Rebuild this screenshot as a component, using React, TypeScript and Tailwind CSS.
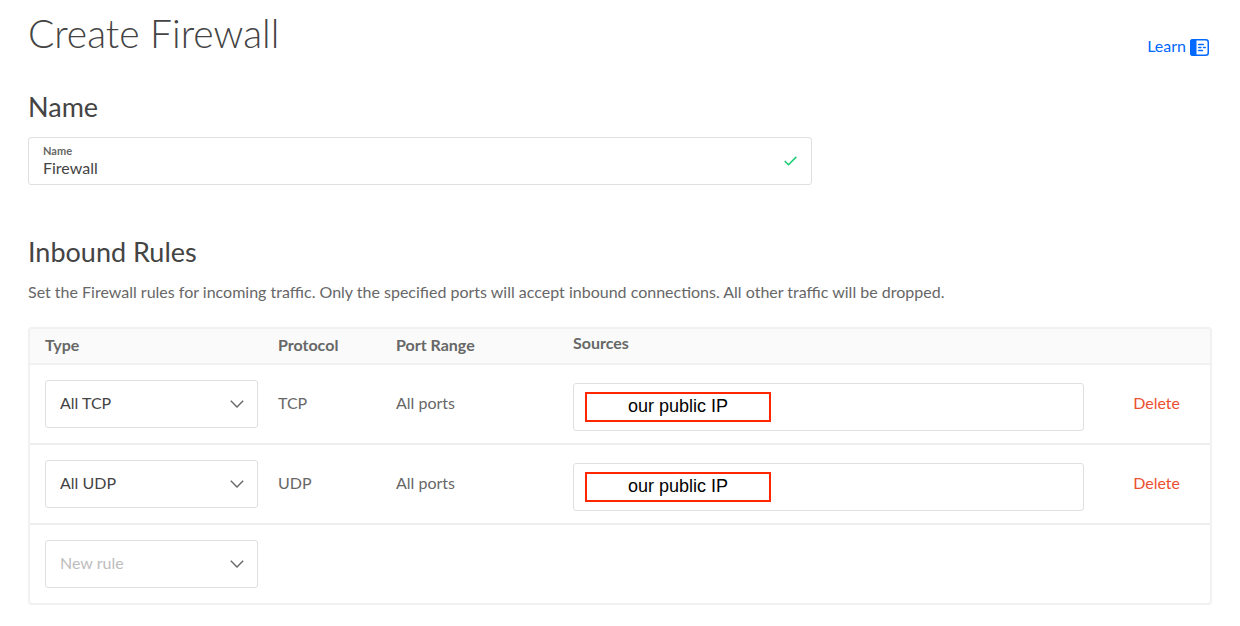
import React, { useState } from "react";

type Rule = { type: string; protocol: string; ports: string; source: string };

const initialRules: Rule[] = [
  { type: "All TCP", protocol: "TCP", ports: "All ports", source: "our public IP" },
  { type: "All UDP", protocol: "UDP", ports: "All ports", source: "our public IP" },
];

function TypeSelect({ label, value, placeholder }: { label: string; value: string; placeholder?: boolean }) {
  return (
    <div className="relative">
      <select
        aria-label={label}
        defaultValue={value}
        className={
          "block h-12 w-full appearance-none rounded-[3px] border border-[#dfdfdf] bg-white pr-10 pb-[2px] pl-[14px] text-base " +
          (placeholder ? "text-[#bdbdbd]" : "text-[#444444]")
        }
      >
        {placeholder && <option>New rule</option>}
        <option>All TCP</option>
        <option>All UDP</option>
      </select>
      <svg
        aria-hidden="true"
        viewBox="0 0 14 8"
        className="pointer-events-none absolute top-5 right-[14px] h-2 w-[14px] fill-none stroke-[#676767]"
        strokeWidth="1.4"
      >
        <path d="M0.8 0.8 7 7 13.2 0.8" />
      </svg>
    </div>
  );
}

function LearnIcon() {
  return (
    <svg aria-hidden="true" viewBox="0 0 19 17" className="h-[17px] w-[19px]">
      <rect x="0.75" y="0.75" width="17.5" height="15.5" rx="2.5" fill="#fff" stroke="#0069ff" strokeWidth="1.5" />
      <path d="M3 0H6.5V17H3A3 3 0 0 1 0 14V3A3 3 0 0 1 3 0Z" fill="#0069ff" />
      <path d="M8.7 5.5H13.3M8.7 8.5H11M13.5 8.5H15.3M8.7 11.5H12.5" stroke="#0069ff" strokeWidth="1.4" strokeLinecap="round" />
    </svg>
  );
}

export default function App() {
  const [rules, setRules] = useState(initialRules);

  return (
    <main className="px-7 pb-5 font-['Lato','Open_Sans',sans-serif] text-base text-[#676767]">
      <header className="flex items-start justify-between">
        <h1 className="pt-[7px] text-[39px] leading-[52px] font-light text-[#444444]">Create Firewall</h1>
        <a href="#learn" className="mt-[34px] mr-[3px] flex items-center gap-1 leading-6 text-[#0069ff]">
          <span className="pb-[2px]">Learn</span>
          <LearnIcon />
        </a>
      </header>

      <section className="pt-[31px]">
        <h2 className="text-[27px] leading-8 text-[#444444]">Name</h2>
        <div className="mt-[14px] flex h-12 max-w-[784px] items-center rounded-[3px] border border-[#dfdfdf] px-[14px]">
          <div className="flex grow flex-col pb-[2px]">
            <label htmlFor="firewall-name" className="text-[11px] leading-[15px] font-bold">
              Name
            </label>
            <input
              id="firewall-name"
              defaultValue="Firewall"
              className="h-5 w-full text-base leading-5 text-[#444444] outline-none"
            />
          </div>
          <svg aria-hidden="true" viewBox="0 0 13 10" className="h-[10px] w-[13px] fill-none stroke-[#15cd72]" strokeWidth="1.5">
            <path d="M0.7 5 4.5 8.7 12.3 0.9" />
          </svg>
        </div>
      </section>

      <section className="pt-[51px]">
        <h2 className="text-[27px] leading-8 text-[#444444]">Inbound Rules</h2>
        <p className="mt-3 leading-6">
          Set the Firewall rules for incoming traffic. Only the specified ports will accept inbound connections. All
          other traffic will be dropped.
        </p>

        <div className="mt-[23px] overflow-hidden rounded-[4px] border-2 border-[#f1f1f1]">
          <table className="w-full table-fixed border-separate border-spacing-0 text-left">
            <colgroup>
              <col className="w-[233px]" />
              <col className="w-[118px]" />
              <col className="w-[177px]" />
              <col />
              <col className="w-[111px]" />
            </colgroup>
            <thead className="bg-[#fafafa]">
              <tr className="h-9 leading-6 *:border-b-2 *:border-[#f1f1f1] *:pl-[15px] *:font-bold">
                <th scope="col" className="pb-[2px]">Type</th>
                <th scope="col" className="pb-[2px]">Protocol</th>
                <th scope="col" className="pb-[2px]">Port Range</th>
                <th scope="col" className="pt-[2px] align-top">Sources</th>
                <td />
              </tr>
            </thead>
            <tbody>
              {rules.map((rule) => (
                <tr key={rule.type} className="h-20 *:border-b-2 *:border-[#eeeeee]">
                  <td className="py-[15px] pr-[5px] pl-[15px]">
                    <TypeSelect label={`Type for ${rule.protocol} rule`} value={rule.type} />
                  </td>
                  <td className="pb-[2px] pl-[15px]">{rule.protocol}</td>
                  <td className="pb-[2px] pl-[15px]">{rule.ports}</td>
                  <td className="px-[15px] pt-[18px] pb-3">
                    <div className="flex h-12 items-center rounded-[3px] border border-[#dfdfdf] px-[11px]">
                      <input
                        aria-label={`Sources for ${rule.protocol} rule`}
                        defaultValue={rule.source}
                        className="h-[30px] w-[186px] border-2 border-[#ff2600] pb-[2px] text-center font-['Liberation_Sans',Arial,sans-serif] text-lg leading-6 text-black"
                      />
                    </div>
                  </td>
                  <td className="pr-[30px] pb-[2px] text-right">
                    <button
                      type="button"
                      className="text-[#ed4f32]"
                      onClick={() => setRules(rules.filter((r) => r !== rule))}
                    >
                      Delete
                    </button>
                  </td>
                </tr>
              ))}
              <tr>
                <td className="py-[15px] pr-[5px] pl-[15px]">
                  <TypeSelect label="Type for new rule" value="New rule" placeholder />
                </td>
                <td colSpan={4} />
              </tr>
            </tbody>
          </table>
        </div>
      </section>
    </main>
  );
}
